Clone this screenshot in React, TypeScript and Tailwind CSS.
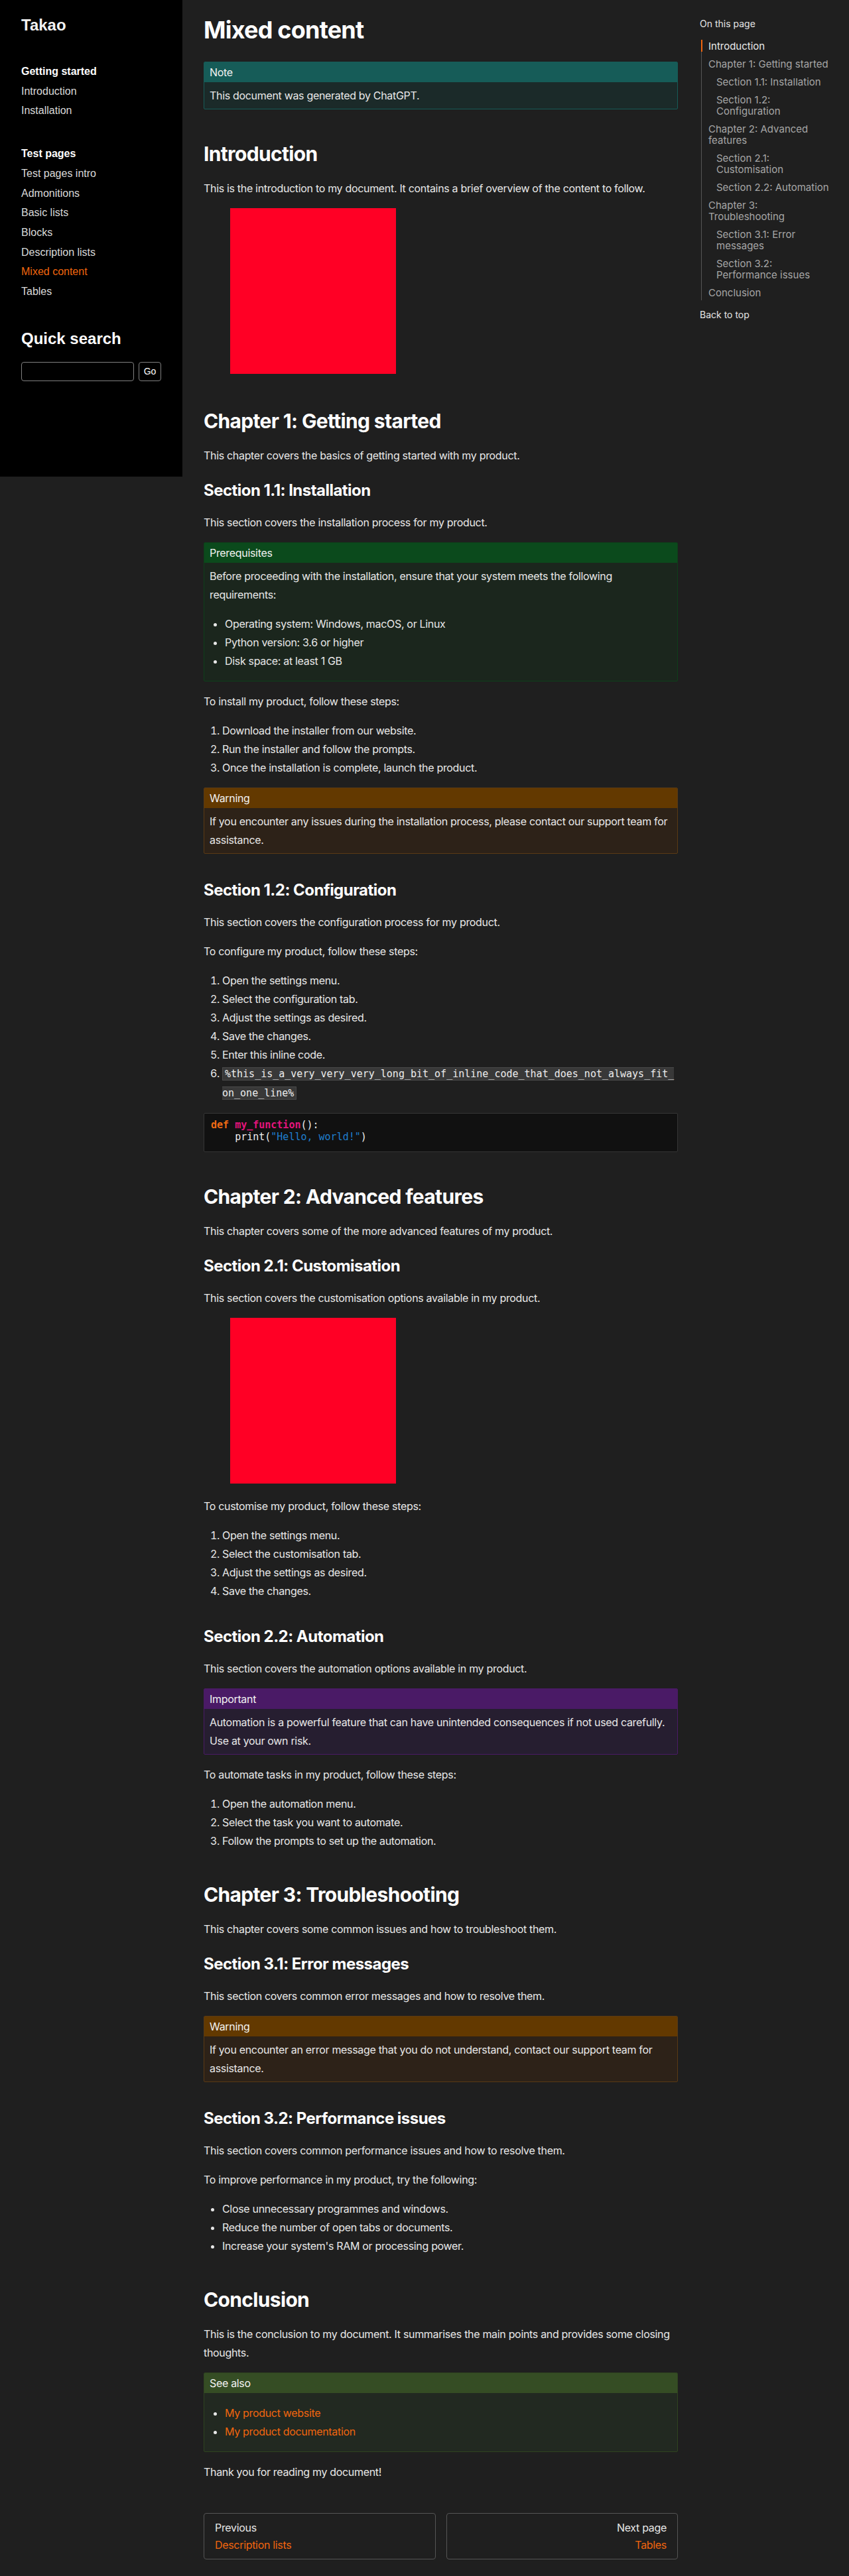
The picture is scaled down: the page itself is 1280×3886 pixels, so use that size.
import type { ReactNode } from "react";

const sidebarGroups = [
  { title: "Getting started", links: ["Introduction", "Installation"] },
  {
    title: "Test pages",
    links: [
      "Test pages intro",
      "Admonitions",
      "Basic lists",
      "Blocks",
      "Description lists",
      "Mixed content",
      "Tables",
    ],
  },
];

const tocItems = [
  { label: "Introduction", sub: false, active: true },
  { label: "Chapter 1: Getting started", sub: false },
  { label: "Section 1.1: Installation", sub: true },
  { label: "Section 1.2: Configuration", sub: true },
  { label: "Chapter 2: Advanced features", sub: false },
  { label: "Section 2.1: Customisation", sub: true },
  { label: "Section 2.2: Automation", sub: true },
  { label: "Chapter 3: Troubleshooting", sub: false },
  { label: "Section 3.1: Error messages", sub: true },
  { label: "Section 3.2: Performance issues", sub: true },
  { label: "Conclusion", sub: false },
];

const admonitionTones = {
  note: { head: "bg-[#165c58]", body: "bg-[#1b2a29]", border: "border-[#165c58]" },
  prereq: { head: "bg-[#0b4a1c]", body: "bg-[#1b261d]", border: "border-[#0e3f1a]" },
  warning: { head: "bg-[#633900]", body: "bg-[#2d2218]", border: "border-[#5a3a14]" },
  important: { head: "bg-[#4a1a66]", body: "bg-[#261e30]", border: "border-[#4a1a66]" },
  seealso: { head: "bg-[#354d24]", body: "bg-[#222921]", border: "border-[#2f4420]" },
};

function Sidebar() {
  return (
    <aside className="h-[719px] w-[275px] shrink-0 bg-black px-8 pt-6 font-['Liberation_Sans',Arial,sans-serif]">
      <div className="text-[24px] font-bold leading-7 text-[#f2f2f2]">Takao</div>

      {sidebarGroups.map((group, i) => (
        <div key={group.title} className={i === 0 ? "mt-[41px]" : "mt-[35px]"}>
          <div className="text-[16px] font-bold leading-[29.7px] text-white">{group.title}</div>
          <ul>
            {group.links.map((link) => (
              <li
                key={link}
                className={
                  link === "Mixed content"
                    ? "text-[16px] leading-[29.7px] text-[#f0650e]"
                    : "text-[16px] leading-[29.7px] text-[#dadada]"
                }
              >
                {link}
              </li>
            ))}
          </ul>
        </div>
      ))}

      {/* Quick search */}
      <div className="mt-[42px] text-[24px] font-bold leading-7 text-white">Quick search</div>
      <div className="mt-[21px] flex gap-[7px]">
        <input
          type="text"
          className="h-[29px] w-[170px] rounded-[4px] border border-[#808080] bg-black px-1 text-[14px] text-white"
        />
        <button
          type="button"
          className="h-[29px] w-[34px] rounded-[4px] border border-[#808080] bg-black text-[14px] text-white"
        >
          Go
        </button>
      </div>
    </aside>
  );
}

function Toc() {
  return (
    <aside className="ml-[33px] w-[195px] shrink-0 pt-[26px] font-['Inter',sans-serif]">
      <div className="text-[14px] leading-5 text-[#e6e6e6]">On this page</div>
      <ul className="ml-[2px] mt-[14px] border-l border-[#555555] pb-[3px] pt-[1px]">
        {tocItems.map((item, i) => (
          <li
            key={item.label}
            className={`relative text-[15px] leading-[17px] ${item.sub ? "pl-[22px]" : "pl-[10px]"} ${
              i < tocItems.length - 1 ? "mb-[10px]" : ""
            } ${item.active ? "text-[#e8e8e8]" : "text-[#a6a6a6]"}`}
          >
            {item.active && (
              <span className="absolute -left-px -top-[1px] h-[18px] w-[2px] bg-[#f0650e]" />
            )}
            {item.label}
          </li>
        ))}
      </ul>
      <div className="mt-3 text-[14px] leading-5 text-[#e6e6e6]">Back to top</div>
    </aside>
  );
}

function Admonition({
  title,
  tone,
  children,
}: {
  title: string;
  tone: keyof typeof admonitionTones;
  children: ReactNode;
}) {
  const t = admonitionTones[tone];
  return (
    <div className={`my-4 overflow-hidden rounded-[2px] border ${t.border} ${t.body}`}>
      <div className={`${t.head} px-2 py-[3px] leading-6 text-[#f2f2f2]`}>{title}</div>
      <div className="px-2 py-[6px] leading-7">{children}</div>
    </div>
  );
}

function H2({ children }: { children: ReactNode }) {
  return (
    <h2 className="mb-5 mt-[49px] text-3xl font-bold leading-9 tracking-[-0.022em] text-white">
      {children}
    </h2>
  );
}

function H3({ children, after }: { children: ReactNode; after?: boolean }) {
  return (
    <h3
      className={`mb-5 text-2xl font-bold leading-[29px] tracking-[-0.022em] text-white ${
        after ? "mt-10" : "mt-6"
      }`}
    >
      {children}
    </h3>
  );
}

function P({ children }: { children: ReactNode }) {
  return <p className="mb-4 leading-7">{children}</p>;
}

function Ol({ items }: { items: ReactNode[] }) {
  return (
    <ol className="my-4 list-decimal pl-7 leading-7">
      {items.map((item, i) => (
        <li key={i}>{item}</li>
      ))}
    </ol>
  );
}

function Ul({ items, inBox }: { items: ReactNode[]; inBox?: boolean }) {
  return (
    <ul className={`list-disc leading-7 ${inBox ? "my-[10px] pl-[23px]" : "my-4 pl-7"}`}>
      {items.map((item, i) => (
        <li key={i}>{item}</li>
      ))}
    </ul>
  );
}

function RedImage() {
  return (
    <div className="mb-4 h-[254px] pl-10">
      <div className="h-[250px] w-[250px] bg-[#ff0025]" />
    </div>
  );
}

function InlineCode({ children }: { children: ReactNode }) {
  return (
    <code className="break-all rounded-[1px] border border-[#4a4a4a] bg-[#383838] px-[3px] font-['DejaVu_Sans_Mono',monospace] text-[15px] tracking-normal text-[#ececec]">
      {children}
    </code>
  );
}

function Content() {
  return (
    <main className="w-[715px] shrink-0 pb-6 pt-6 font-['Inter',sans-serif] text-base tracking-[-0.02em] text-[#e8e8e8]">
      <h1 className="mb-[26px] text-4xl font-bold leading-[43px] tracking-[-0.022em] text-white">
        Mixed content
      </h1>

      <Admonition title="Note" tone="note">
        <p>This document was generated by ChatGPT.</p>
      </Admonition>

      <H2>Introduction</H2>
      <P>This is the introduction to my document. It contains a brief overview of the content to follow.</P>
      <RedImage />

      <H2>Chapter 1: Getting started</H2>
      <P>This chapter covers the basics of getting started with my product.</P>

      <H3>Section 1.1: Installation</H3>
      <P>This section covers the installation process for my product.</P>
      <Admonition title="Prerequisites" tone="prereq">
        <p className="mb-4">
          Before proceeding with the installation, ensure that your system meets the following requirements:
        </p>
        <Ul
          inBox
          items={[
            "Operating system: Windows, macOS, or Linux",
            "Python version: 3.6 or higher",
            "Disk space: at least 1 GB",
          ]}
        />
      </Admonition>
      <P>To install my product, follow these steps:</P>
      <Ol
        items={[
          "Download the installer from our website.",
          "Run the installer and follow the prompts.",
          "Once the installation is complete, launch the product.",
        ]}
      />
      <Admonition title="Warning" tone="warning">
        <p>If you encounter any issues during the installation process, please contact our support team for assistance.</p>
      </Admonition>

      <H3 after>Section 1.2: Configuration</H3>
      <P>This section covers the configuration process for my product.</P>
      <P>To configure my product, follow these steps:</P>
      <Ol
        items={[
          "Open the settings menu.",
          "Select the configuration tab.",
          "Adjust the settings as desired.",
          "Save the changes.",
          "Enter this inline code.",
          <InlineCode key="code">
            %this_is_a_very_very_very_long_bit_of_inline_code_that_does_not_always_fit_on_one_line%
          </InlineCode>,
        ]}
      />
      <pre className="mt-4 rounded-[2px] border border-[#353535] bg-[#111111] pb-3 pl-[10px] pt-2 font-['DejaVu_Sans_Mono',monospace] text-[15px] leading-[18.3px] tracking-normal text-[#eeeeee]">
        <span className="font-bold text-[#f06a14]">def</span>{" "}
        <span className="font-bold text-[#e3147c]">my_function</span>():{"\n"}
        {"    "}print(<span className="text-[#1f7fcf]">"Hello, world!"</span>)
      </pre>

      <H2>Chapter 2: Advanced features</H2>
      <P>This chapter covers some of the more advanced features of my product.</P>

      <H3>Section 2.1: Customisation</H3>
      <P>This section covers the customisation options available in my product.</P>
      <RedImage />
      <P>To customise my product, follow these steps:</P>
      <Ol
        items={[
          "Open the settings menu.",
          "Select the customisation tab.",
          "Adjust the settings as desired.",
          "Save the changes.",
        ]}
      />

      <H3 after>Section 2.2: Automation</H3>
      <P>This section covers the automation options available in my product.</P>
      <Admonition title="Important" tone="important">
        <p>Automation is a powerful feature that can have unintended consequences if not used carefully. Use at your own risk.</p>
      </Admonition>
      <P>To automate tasks in my product, follow these steps:</P>
      <Ol
        items={[
          "Open the automation menu.",
          "Select the task you want to automate.",
          "Follow the prompts to set up the automation.",
        ]}
      />

      <H2>Chapter 3: Troubleshooting</H2>
      <P>This chapter covers some common issues and how to troubleshoot them.</P>

      <H3>Section 3.1: Error messages</H3>
      <P>This section covers common error messages and how to resolve them.</P>
      <Admonition title="Warning" tone="warning">
        <p>If you encounter an error message that you do not understand, contact our support team for assistance.</p>
      </Admonition>

      <H3 after>Section 3.2: Performance issues</H3>
      <P>This section covers common performance issues and how to resolve them.</P>
      <P>To improve performance in my product, try the following:</P>
      <Ul
        items={[
          "Close unnecessary programmes and windows.",
          "Reduce the number of open tabs or documents.",
          "Increase your system's RAM or processing power.",
        ]}
      />

      <H2>Conclusion</H2>
      <P>
        This is the conclusion to my document. It summarises the main points and provides some closing thoughts.
      </P>
      <Admonition title="See also" tone="seealso">
        <Ul
          inBox
          items={[
            <span key="a" className="text-[#f0650e]">My product website</span>,
            <span key="b" className="text-[#f0650e]">My product documentation</span>,
          ]}
        />
      </Admonition>
      <P>Thank you for reading my document!</P>

      {/* Prev / next */}
      <div className="mt-12 flex gap-4">
        <div className="flex-1 rounded-[4px] border border-[#555555] px-4 py-2 leading-[26px]">
          <div className="text-[#e6e6e6]">Previous</div>
          <div className="text-[#f0650e]">Description lists</div>
        </div>
        <div className="flex-1 rounded-[4px] border border-[#555555] px-4 py-2 text-right leading-[26px]">
          <div className="text-[#e6e6e6]">Next page</div>
          <div className="text-[#f0650e]">Tables</div>
        </div>
      </div>
    </main>
  );
}

export default function App() {
  return (
    <div className="flex min-h-[3886px] items-start bg-[#1f1f1f]">
      <Sidebar />
      <div className="ml-8 flex">
        <Content />
        <Toc />
      </div>
    </div>
  );
}
